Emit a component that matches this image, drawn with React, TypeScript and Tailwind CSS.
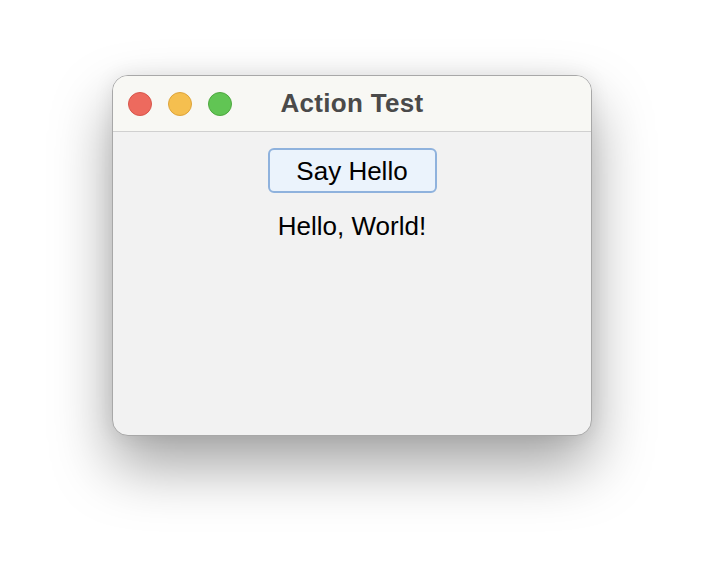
export default function App() {
  return (
    <div className="w-[704px] h-[584px] bg-white flex justify-center pt-[75px] font-['Liberation_Sans',Helvetica,Arial,sans-serif]">
      <div className="w-[480px] h-[361px] rounded-[16px] bg-[#f2f2f2] border border-[#a8a8a8] shadow-[0_30px_60px_rgba(0,0,0,0.36),0_0_20px_rgba(0,0,0,0.08)] overflow-hidden flex flex-col">
        {/* Title bar */}
        <div className="relative h-[56px] bg-[#f8f8f4] border-b border-[#d0d0d0] flex items-center shrink-0">
          <div className="flex gap-[16px] pl-[15px]">
            <span className="w-[24px] h-[24px] rounded-full bg-[#ed6a5e] border border-[#d8564b]" />
            <span className="w-[24px] h-[24px] rounded-full bg-[#f5bf4f] border border-[#dea43a]" />
            <span className="w-[24px] h-[24px] rounded-full bg-[#61c554] border border-[#4ea83f]" />
          </div>
          <div className="absolute inset-0 flex items-center justify-center text-[26px] font-bold tracking-[0.3px] text-[#4a4a4a] pointer-events-none">
            Action Test
          </div>
        </div>

        {/* Content */}
        <div className="flex flex-col items-center pt-[16px]">
          <button className="w-[169px] h-[45px] rounded-[6px] border-2 border-[#8fb2dd] bg-[#ebf3fc] text-[26px] text-black leading-none">
            Say Hello
          </button>
          <p className="mt-[18px] text-[26px] text-black leading-[30px]">Hello, World!</p>
        </div>
      </div>
    </div>
  )
}
